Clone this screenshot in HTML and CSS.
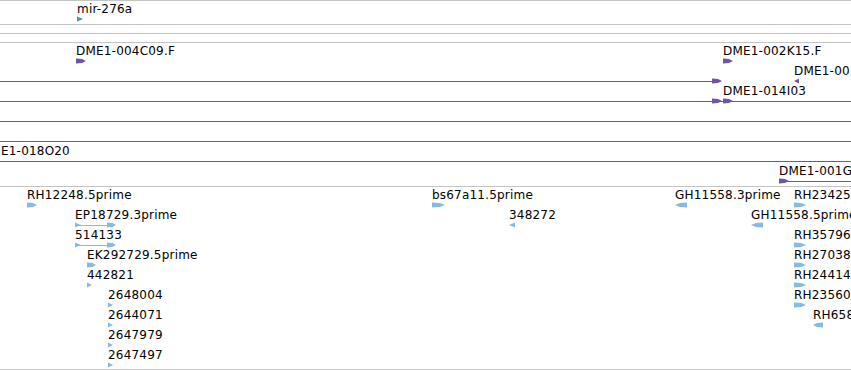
FILE: index.html
```html
<!DOCTYPE html>
<html lang="en">
<head>
    <meta charset="UTF-8">
    <meta name="viewport" content="width=device-width, initial-scale=1.0">
    <title>Track View</title>
    <link rel="stylesheet" href="styles.css">
</head>
<body>

    <div class="tracks">
        <div class="track mirna" id="mirTrack"></div>
        <div class="track empty"></div>
        <div class="track empty"></div>
        <div class="track bac" id="bacTrack"></div>
        <div class="track est" id="estTrack"></div>
    </div>

    <script>
        // glyph parts: ["f", x, width] forward, ["r", x, width] reverse, ["l", x1, x2] line
        let mirFeatures = [
            { label: "mir-276a", x: 77, row: 0, g: [["f", 77, 6]] }
        ];

        let bacFeatures = [
            { label: "DME1-004C09.F", x: 76, row: 0, g: [["f", 76, 10]] },
            { label: "DME1-002K15.F", x: 723, row: 0, g: [["f", 723, 10]] },
            { row: 1, g: [["l", 0, 716], ["f", 712, 10]] },
            { label: "DME1-00", x: 794, row: 1, g: [["r", 794, 5]] },
            { label: "DME1-014I03", x: 723, row: 2, g: [["l", 0, 851], ["f", 712, 10], ["f", 723, 10]] },
            { row: 3, g: [["l", 0, 851]] },
            { row: 4, g: [["l", 0, 851]] },
            { label: "DME1-018O20", x: -19, row: 5, g: [["l", 0, 851]] },
            { label: "DME1-001G", x: 779, row: 6, g: [["l", 785, 851], ["f", 779, 10]] }
        ];

        let estFeatures = [
            { label: "RH12248.5prime", x: 27, row: 0, g: [["f", 27, 10]] },
            { label: "bs67a11.5prime", x: 432, row: 0, g: [["f", 432, 13]] },
            { label: "GH11558.3prime", x: 675, row: 0, g: [["r", 675, 12]] },
            { label: "RH23425", x: 794, row: 0, g: [["f", 794, 12]] },
            { label: "EP18729.3prime", x: 75, row: 1, g: [["l", 79, 110], ["f", 75, 6], ["f", 107, 9]] },
            { label: "348272", x: 509, row: 1, g: [["r", 509, 6]] },
            { label: "GH11558.5prime", x: 751, row: 1, g: [["r", 751, 12]] },
            { label: "514133", x: 75, row: 2, g: [["l", 79, 110], ["f", 75, 6], ["f", 107, 9]] },
            { label: "RH35796", x: 794, row: 2, g: [["f", 794, 12]] },
            { label: "EK292729.5prime", x: 87, row: 3, g: [["f", 87, 9]] },
            { label: "RH27038", x: 794, row: 3, g: [["f", 794, 12]] },
            { label: "442821", x: 87, row: 4, g: [["f", 87, 5]] },
            { label: "RH24414", x: 794, row: 4, g: [["f", 794, 12]] },
            { label: "2648004", x: 108, row: 5, g: [["f", 108, 5]] },
            { label: "RH23560", x: 794, row: 5, g: [["f", 794, 12]] },
            { label: "2644071", x: 108, row: 6, g: [["f", 108, 5]] },
            { label: "RH658", x: 813, row: 6, g: [["r", 813, 10]] },
            { label: "2647979", x: 108, row: 7, g: [["f", 108, 5]] },
            { label: "2647497", x: 108, row: 8, g: [["f", 108, 5]] }
        ];

        function glyphShape(part, row) {
            let top = row * 20 + 15.5;
            let kind = part[0];
            if (kind === "l") {
                return '<rect x="' + part[1] + '" y="' + (row * 20 + 18) + '" width="' + (part[2] - part[1]) + '" height="1"/>';
            }
            let x = part[1];
            let w = part[2];
            let pts;
            if (w <= 6) {
                pts = kind === "f"
                    ? [[x, top], [x + w, top + 2.5], [x, top + 5]]
                    : [[x + w, top], [x, top + 2.5], [x + w, top + 5]];
            } else {
                let neck = w * 0.6;
                pts = kind === "f"
                    ? [[x, top], [x + neck, top + 0.5], [x + w, top + 2.5], [x + neck, top + 4.5], [x, top + 5]]
                    : [[x + w, top], [x + w - neck, top + 0.5], [x, top + 2.5], [x + w - neck, top + 4.5], [x + w, top + 5]];
            }
            return '<polygon points="' + pts.map(p => p.join(",")).join(" ") + '"/>';
        }

        function drawTrack(id, features) {
            let track = document.getElementById(id);
            let shapes = "";

            features.forEach(feature => {
                feature.g.forEach(part => {
                    shapes += glyphShape(part, feature.row);
                });
                if (feature.label) {
                    let label = document.createElement("div");
                    label.className = "label";
                    label.textContent = feature.label;
                    label.style.left = feature.x + "px";
                    label.style.top = (feature.row * 20 + 1) + "px";
                    track.appendChild(label);
                }
            });

            let svg = '<svg class="glyphs" width="851" height="' + track.offsetHeight + '">' + shapes + '</svg>';
            track.insertAdjacentHTML("afterbegin", svg);
        }

        drawTrack("mirTrack", mirFeatures);
        drawTrack("bacTrack", bacFeatures);
        drawTrack("estTrack", estFeatures);
    </script>

</body>
</html>
```

FILE: styles.css
```css
body {
    font-family: "DejaVu Sans", sans-serif;
    background-color: #fff;
    margin: 0;
    padding: 0;
    color: #000;
    overflow: hidden;
}

.tracks {
    width: 851px;
    border-top: 1px solid #c4c4c4;
}

.track {
    position: relative;
    overflow: hidden;
    border-bottom: 1px solid #c4c4c4;
}

.mirna {
    height: 23px;
}

.empty {
    height: 8px;
}

.bac {
    height: 143px;
}

.est {
    height: 182px;
}

.glyphs {
    position: absolute;
    top: 0;
    left: 0;
}

.mirna .glyphs {
    fill: #3f9aa9;
}

.bac .glyphs {
    fill: #7055a6;
}

.est .glyphs {
    fill: #85bbe0;
}

.label {
    position: absolute;
    font-size: 12px;
    line-height: 14px;
    letter-spacing: 0.2px;
    white-space: nowrap;
}
```
